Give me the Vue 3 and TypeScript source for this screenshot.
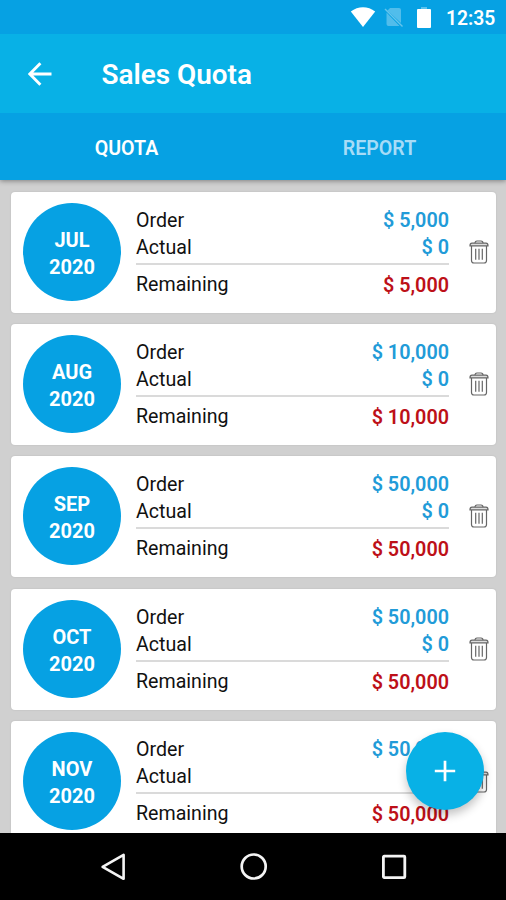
<script setup lang="ts">
interface Quota {
  month: string
  year: number
  order: number
  actual: number
}

const quotas: Quota[] = [
  { month: 'JUL', year: 2020, order: 5000, actual: 0 },
  { month: 'AUG', year: 2020, order: 10000, actual: 0 },
  { month: 'SEP', year: 2020, order: 50000, actual: 0 },
  { month: 'OCT', year: 2020, order: 50000, actual: 0 },
  { month: 'NOV', year: 2020, order: 50000, actual: 0 },
]

const money = (value: number): string => '$ ' + value.toLocaleString('en-US')
</script>

<template>
  <div class="screen">
    <div class="status">
      <svg class="wifi" width="26" height="21" viewBox="0 0 26 21">
        <path d="M.8 4.6C8-1.1 18-1.1 25.2 4.6L13 20Z" fill="#fff" />
      </svg>
      <svg class="sim" width="20" height="21" viewBox="0 0 20 21">
        <path d="M6 1H15Q17 1 17 3V16L3.5 3.5ZM2.5 5.5L15.5 19H4.5Q2.5 19 2.5 17Z" fill="#fff" opacity=".34" />
        <path d="M1 2L18.5 19.5" stroke="#fff" stroke-width="1.4" opacity=".42" />
      </svg>
      <svg class="battery" width="14" height="21" viewBox="0 0 14 21">
        <path d="M4 0H10V2H4Z" fill="#fff" opacity=".35" />
        <rect y="2" width="14" height="19" rx="1" fill="#fff" />
      </svg>
      <span class="clock">12:35</span>
    </div>
    <header class="toolbar">
      <svg class="back" width="24" height="24" viewBox="0 0 24 24">
        <path d="M12.4 1.3L1.8 12L12.4 22.7M2 12H23.5" fill="none" stroke="#fff" stroke-width="2.9" />
      </svg>
      <h1>Sales Quota</h1>
    </header>
    <nav class="tabs">
      <div class="tab active"><span>QUOTA</span></div>
      <div class="tab"><span>REPORT</span></div>
    </nav>
    <main class="list">
      <article v-for="q in quotas" :key="q.month" class="card">
        <div class="badge"><span>{{ q.month }}</span><span>{{ q.year }}</span></div>
        <div class="details">
          <div class="row"><span>Order</span><b>{{ money(q.order) }}</b></div>
          <div class="row"><span>Actual</span><b>{{ money(q.actual) }}</b></div>
          <div class="row remaining"><span>Remaining</span><b>{{ money(q.order - q.actual) }}</b></div>
        </div>
        <svg class="trash" width="20" height="24" viewBox="0 0 20 24">
          <g fill="none" stroke="#666" stroke-width="1.2">
            <path d="M6 3.2Q6 1 8 1H12Q14 1 14 3.2" />
            <path d="M1 5.8Q1 3.2 3 3.2H17Q19 3.2 19 5.8Z" fill="#ddd" />
            <path d="M2.5 6V20.5Q2.5 23 5 23H15Q17.5 23 17.5 20.5V6" />
            <path d="M6.7 8.8V19.7M10 8.8V19.7M13.3 8.8V19.7" />
          </g>
        </svg>
      </article>
    </main>
    <button class="fab" aria-label="Add quota">
      <svg width="22" height="22" viewBox="0 0 22 22">
        <path d="M11 .8V21.2M.8 11H21.2" stroke="#fff" stroke-width="2.7" />
      </svg>
    </button>
    <footer class="navbar">
      <svg width="28" height="30" viewBox="0 0 28 30">
        <path d="M24.6 2.8V26.8L3.6 14.8Z" fill="none" stroke="#f4f4f4" stroke-width="2.6" stroke-linejoin="round" />
      </svg>
      <svg width="28" height="30" viewBox="0 0 28 30">
        <circle cx="13.7" cy="14.5" r="12" fill="none" stroke="#f4f4f4" stroke-width="2.7" />
      </svg>
      <svg width="28" height="30" viewBox="0 0 28 30">
        <rect x="3.4" y="4.2" width="21.4" height="21.4" rx=".8" fill="none" stroke="#f4f4f4" stroke-width="2.8" />
      </svg>
    </footer>
  </div>
</template>

<style>
body {
  margin: 0;
  overflow: hidden;
}
</style>

<style scoped>
.screen {
  position: relative;
  display: flex;
  flex-direction: column;
  width: 506px;
  height: 900px;
  overflow: hidden;
  background: #d0d0d0;
  font-family: Roboto, sans-serif;
  color: #111;
}
.status {
  flex: none;
  display: flex;
  align-items: center;
  justify-content: flex-end;
  height: 34px;
  padding-right: 10px;
  box-sizing: border-box;
  background: #06a1e3;
  color: #fff;
}
.sim { margin-left: 8px; opacity: .9; }
.battery { margin-left: 13px; }
.clock {
  width: 50px;
  margin-left: 15px;
  padding-top: 3px;
  font-size: 19.3px;
  font-weight: 600;
  line-height: 34px;
  white-space: nowrap;
}
.toolbar {
  flex: none;
  display: flex;
  align-items: center;
  height: 79px;
  padding-left: 28px;
  background: #08b1e6;
  color: #fff;
}
h1 {
  margin: 3px 0 0 49.5px;
  font-size: 27.9px;
  font-weight: 580;
  line-height: 34px;
  white-space: nowrap;
}
.tabs {
  flex: none;
  position: relative;
  z-index: 1;
  display: flex;
  height: 67px;
  background: #06a1e3;
  box-shadow: 0 1px 5px rgba(0, 0, 0, .4);
  clip-path: inset(0 0 -8px);
}
.tab {
  flex: 1;
  display: flex;
  align-items: center;
  justify-content: center;
  padding-top: 3px;
  font-size: 19.6px;
  font-weight: 600;
  color: #a6dcf7;
}
.tab.active { color: #fff; }
.list {
  flex: 1;
  min-height: 0;
  display: flex;
  flex-direction: column;
  gap: 11.2px;
  padding: 12px 10px 0 11px;
  overflow: hidden;
}
.card {
  flex: none;
  display: flex;
  align-items: flex-start;
  height: 121px;
  box-sizing: border-box;
  padding: 11px 7px 0 12px;
  border-radius: 4px;
  background: #fff;
  box-shadow: 0 0 2px rgba(0, 0, 0, .12);
}
.badge {
  flex: none;
  display: flex;
  flex-direction: column;
  align-items: center;
  justify-content: center;
  width: 98px;
  height: 98px;
  border-radius: 50%;
  background: #06a1e3;
  color: #fff;
  font-size: 20px;
  font-weight: 700;
  line-height: 27px;
  padding-top: 4px;
  box-sizing: border-box;
}
.details {
  width: 313px;
  margin: 4px 0 0 15px;
  font-size: 19.6px;
  line-height: 27px;
}
.row {
  display: flex;
  justify-content: space-between;
}
.row b {
  font-size: 19.8px;
  font-weight: 600;
  color: #219bd8;
}
.remaining {
  margin-top: 2px;
  padding-top: 6px;
  border-top: 2px solid #dadada;
}
.row.remaining b {
  margin-top: 1px;
  margin-bottom: -1px;
  color: #bd1018;
}
.trash {
  flex: none;
  margin: 37px 0 0 20px;
}
.fab {
  position: absolute;
  left: 405.5px;
  top: 731.5px;
  display: flex;
  align-items: center;
  justify-content: center;
  width: 78.5px;
  height: 78.5px;
  padding: 0;
  border: 0;
  border-radius: 50%;
  background: #08b1e6;
  box-shadow: 0 5px 10px rgba(0, 0, 0, .24);
}
.navbar {
  flex: none;
  position: relative;
  display: flex;
  align-items: center;
  justify-content: space-between;
  height: 67px;
  box-sizing: border-box;
  padding: 0 98px 0 99px;
  background: #000;
}
</style>
